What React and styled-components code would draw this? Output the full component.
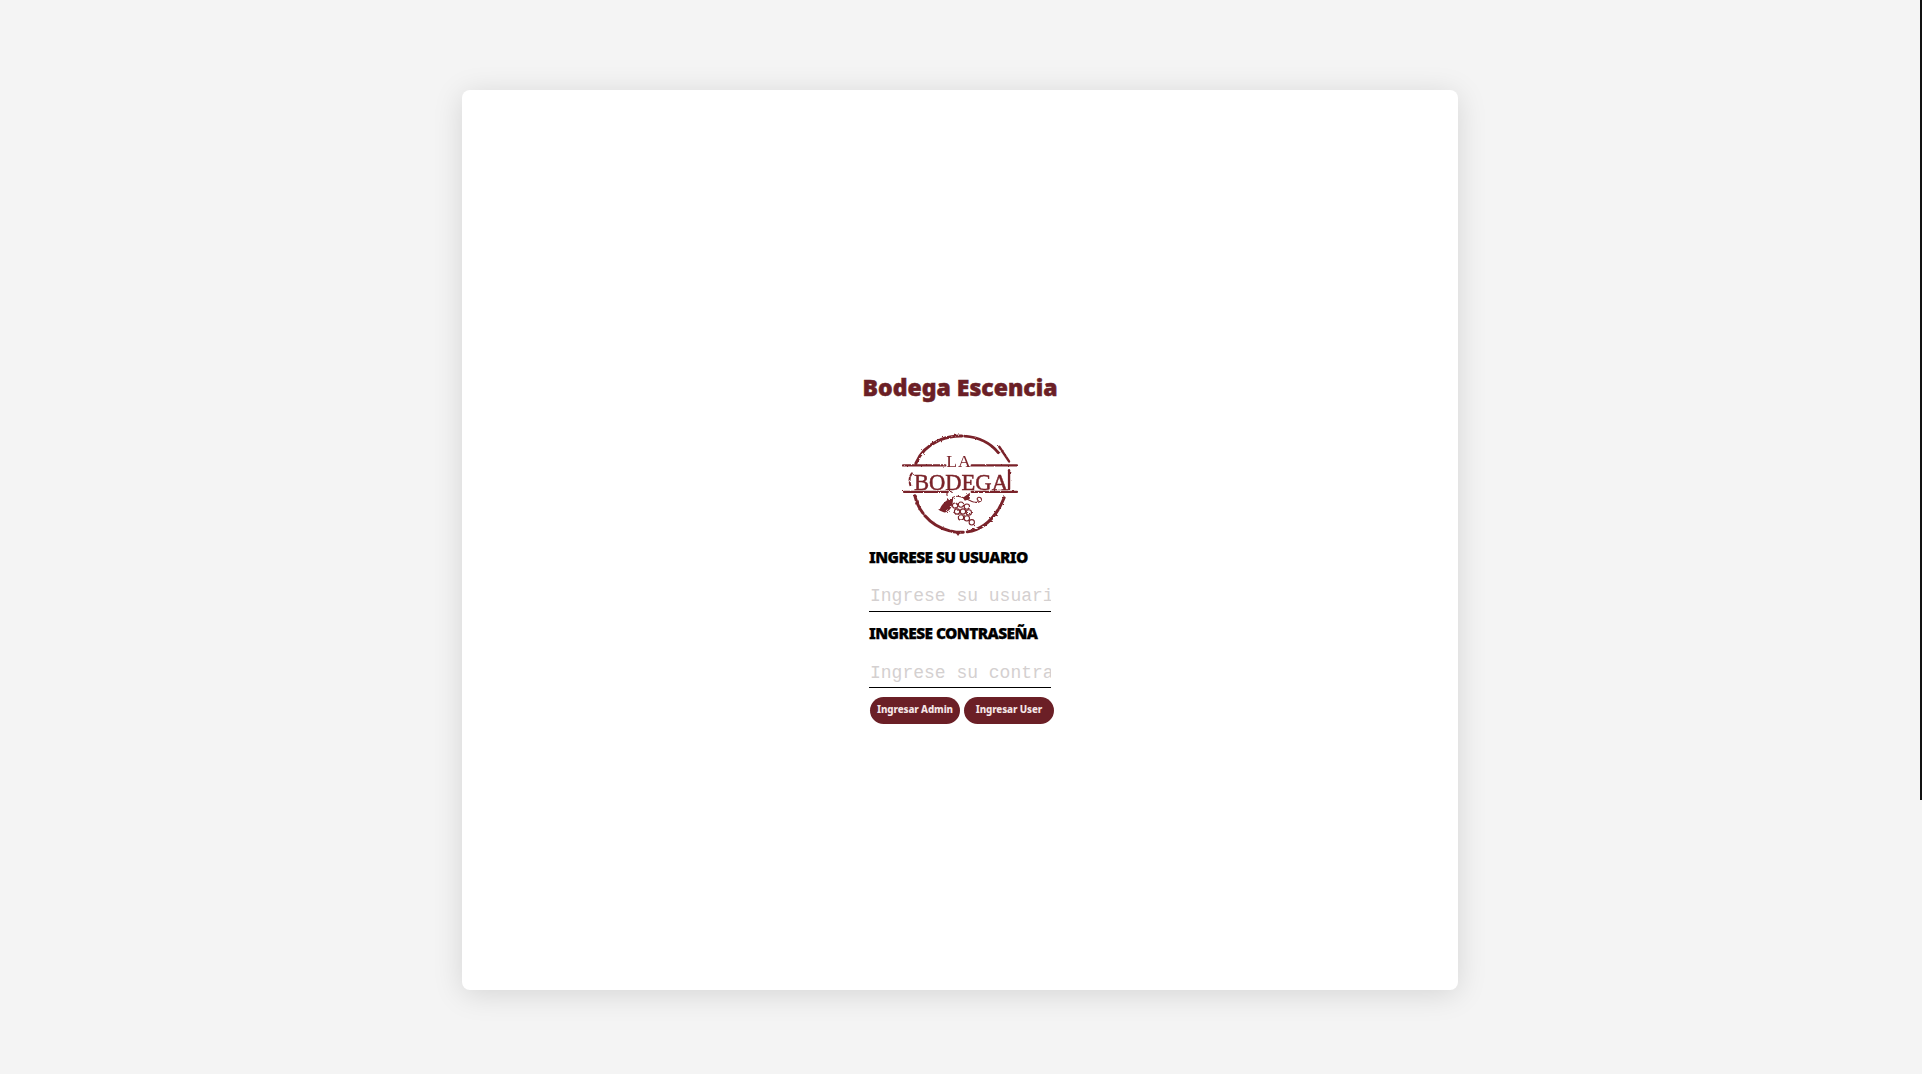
import styled, { createGlobalStyle } from 'styled-components';

const GlobalStyle = createGlobalStyle`
  html, body {
    margin: 0;
    padding: 0;
    height: 100%;
    overflow: hidden;
    background: #f4f4f4;
  }
  * { box-sizing: border-box; }
`;

const Page = styled.main`
  height: 1074px;
  padding: 90px 2px 0 0;
  display: flex;
  justify-content: center;
  align-items: flex-start;
  background: #f4f4f4;
`;

const ScrollThumb = styled.div`
  position: fixed;
  top: 0;
  right: 0;
  width: 2px;
  height: 800px;
  background: #111;
`;

const Card = styled.section`
  width: 996px;
  height: 900px;
  padding-top: 280px;
  background: #fff;
  border-radius: 8px;
  box-shadow: 0 4px 30px rgba(0, 0, 0, 0.13);
  display: flex;
  flex-direction: column;
  align-items: center;
`;

const Title = styled.h1`
  margin: 0 0 28px;
  font: 900 23px/34px "Noto Sans", sans-serif;
  -webkit-text-stroke: 0.5px #6b1f26;
  color: #6b1f26;
`;

const Logo = styled.svg`
  display: block;
  width: 118px;
  height: 104px;
  margin: 1px 0 9px;
`;

const Form = styled.form`
  width: 182px;
  display: flex;
  flex-direction: column;
`;

const Label = styled.label`
  font: 900 15.5px/22px "Noto Sans", sans-serif;
  letter-spacing: -0.6px;
  -webkit-text-stroke: 0.25px #000;
  color: #000;
  white-space: nowrap;
`;

const Input = styled.input`
  width: 182px;
  height: 44px;
  margin-bottom: 10px;
  padding: ${(props) => (props.type === 'password' ? '14px' : '13px')} 0 0 1px;
  border: 0;
  border-bottom: 1px solid #000;
  outline: none;
  background: transparent;
  font: 18px "Liberation Mono", monospace;
  &::placeholder { color: #d4d0d0; opacity: 1; }
`;

const Buttons = styled.div`
  display: flex;
  gap: 4px;
  width: 184px;
  margin: -1px 0 0 1px;
`;

const Button = styled.button`
  width: 90px;
  height: 27px;
  padding: 0 0 3px;
  border: 0;
  border-radius: 14px;
  background: #6b1f26;
  color: #f5e6e6;
  font: 800 9.8px "Noto Sans", sans-serif;
  letter-spacing: -0.1px;
  white-space: nowrap;
`;

const wine = '#7a2229';

const LogoMark = () => (
  <Logo viewBox="0 0 120 106" aria-label="La Bodega">
    <defs>
      <filter id="rough" x="-5%" y="-5%" width="110%" height="110%">
        <feTurbulence type="fractalNoise" baseFrequency="0.35" numOctaves="2" seed="4" />
        <feDisplacementMap in="SourceGraphic" scale="2.4" />
        <feGaussianBlur stdDeviation="0.3" />
      </filter>
      <filter id="soft">
        <feGaussianBlur stdDeviation="0.25" />
      </filter>
    </defs>
    <g filter="url(#rough)">
      <g fill="none" stroke={wine} strokeLinecap="round">
        <path d="M15 31 C22 14 40 3 60 3 C76 3 90 9 99 20" strokeWidth="3" strokeDasharray="34 2 22 3 40 2" />
        <path d="M100 14 L110 29" strokeWidth="2.4" />
        <path d="M14 64 C19 84 34 98 56 101 C76 103 94 93 105 66" strokeWidth="3" strokeDasharray="20 3 30 2 12 4 40 2" />
        <path d="M2 33 H45 M72 33 H118" strokeWidth="2.4" />
        <path d="M3 60 H47 M72 60 H118" strokeWidth="2.4" />
        <path d="M11 41 C8 45 8 50 10 55" strokeWidth="2" strokeDasharray="3 2" />
        <path d="M110 38 V57" strokeWidth="2.4" />
      </g>
      <path d="M39 79 C41 72 47 67 53 66 C53 72 51 80 44 81 Z" fill={wine} />
      <path d="M63 66 L70 61 L70 67 L65 69 Z" fill={wine} />
      <g fill="none" stroke={wine} strokeWidth="1.1">
        <path d="M47 64 C45 60 51 58 52 61 M52 66 C58 62 66 67 73 70 C79 72 84 69 81 66 C78 64 76 68 79 69" />
        {[[55, 74], [61, 73], [67, 75], [57, 80], [63, 80], [69, 81], [61, 86], [67, 87], [72, 91]].map(([cx, cy]) => (
          <circle key={`${cx}-${cy}`} cx={cx} cy={cy} r="2.7" />
        ))}
      </g>
      <path d="M55 101 L61 101 L58 105 Z" fill={wine} />
    </g>
    <g filter="url(#soft)" fontFamily="'Liberation Serif', serif" fill={wine} textAnchor="middle">
      <text x="59" y="35" fontSize="18" letterSpacing="1">LA</text>
      <text x="61" y="58" fontSize="23" stroke={wine} strokeWidth="0.5">BODEGA</text>
    </g>
  </Logo>
);

export default function App() {
  return (
    <>
      <GlobalStyle />
      <Page>
        <Card>
          <Title>Bodega Escencia</Title>
          <LogoMark />
          <Form onSubmit={(e) => e.preventDefault()}>
            <Label htmlFor="usuario">INGRESE SU USUARIO</Label>
            <Input id="usuario" type="text" placeholder="Ingrese su usuario" />
            <Label htmlFor="clave">INGRESE CONTRASEÑA</Label>
            <Input id="clave" type="password" placeholder="Ingrese su contraseña" />
            <Buttons>
              <Button type="button">Ingresar Admin</Button>
              <Button type="button">Ingresar User</Button>
            </Buttons>
          </Form>
        </Card>
      </Page>
      <ScrollThumb />
    </>
  );
}
